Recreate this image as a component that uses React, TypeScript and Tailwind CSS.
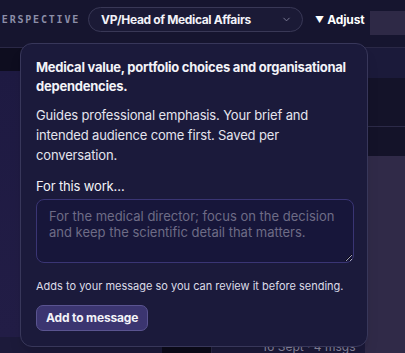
import { ChevronDown } from "lucide-react";

const font = { fontFamily: "Inter, 'Noto Sans', sans-serif" };

export default function App() {
  return (
    <div
      className="relative w-[405px] h-[353px] overflow-hidden bg-[#16152f] text-white"
      style={font}
    >
      {/* header */}
      <div className="flex items-start h-[47px] pt-[7px]">
        <span className="ml-[-6px] mt-[6px] text-[10px] leading-[13px] font-bold tracking-[1.8px] text-[#8c8ea8] font-['DejaVu_Sans_Mono',monospace]">
          PERSPECTIVE
        </span>
        <button className="ml-[8px] flex shrink-0 items-center justify-between w-[215px] h-[25px] pl-[12px] pr-[10px] rounded-full border border-[#393856] bg-[#1b1a36]">
          <span className="whitespace-nowrap text-[12px] font-bold tracking-[-0.35px] text-[#f2f2f8]">
            VP/Head of Medical Affairs
          </span>
          <ChevronDown size={11} strokeWidth={2} className="text-[#7f7f99]" />
        </button>
        <div className="ml-[12px] flex shrink-0 items-center gap-[3px] h-[25px]">
          <span className="text-[9px] leading-none">▼</span>
          <span className="text-[12px] font-bold tracking-[-0.1px]">Adjust</span>
        </div>
        <div className="ml-auto mt-[4px] w-[35px] h-[24px] shrink-0 bg-[#2e2946]" />
      </div>

      {/* body behind popover */}
      <div className="flex h-[306px] border-t border-[#2a2846]">
        <div className="flex flex-col flex-1">
          <div className="h-[23px] bg-[#0e0d1f]" />
          <div className="flex-1 bg-gradient-to-b from-[#1e1a42] to-[#221d46]" />
          <div className="flex h-[16px] bg-[#1c1a3a] text-[12px] text-[#8d8ba3]">
            <div className="ml-[162px] w-[50px] bg-[#0c0b1a] border-r border-[#2a2846]" />
            <span className="ml-[50px] leading-[16px] pt-[2px]">16 Sept · 4 msgs</span>
          </div>
        </div>
        <div className="flex flex-col w-[40px]">
          <div className="h-[30px] bg-[#1b1a3a]" />
          <div className="h-[49px] bg-[#141329] border-b border-[#2c2a48]" />
          <div className="h-[29px] bg-[#141329]" />
          <div className="flex-1 bg-[#302a48]" />
        </div>
      </div>

      {/* popover */}
      <div className="absolute left-[20px] top-[43px] w-[348px] h-[304px] rounded-[12px] border border-[#38375a] bg-[#1b1a3b] px-[15px] pt-[14px] shadow-lg tracking-[-0.15px]">
        <p className="text-[13px] leading-[19px] font-bold tracking-[-0.25px] text-[#f3f3f8]">
          Medical value, portfolio choices and organisational dependencies.
        </p>
        <p className="mt-[9px] text-[13px] leading-[20px] text-[#e4e4ee] pr-[40px]">
          Guides professional emphasis. Your brief and intended audience come first. Saved per
          conversation.
        </p>
        <p className="mt-[11px] text-[13px] leading-[20px] text-[#f3f3f8]">For this work…</p>
        <textarea
          className="mt-[3px] block w-[318px] h-[64px] rounded-[8px] border border-[#3a3574] bg-[#17163a] px-[12px] py-[8px] text-[13px] leading-[16px] tracking-normal text-white placeholder:text-[#6e6c86] outline-none"
          placeholder="For the medical director; focus on the decision and keep the scientific detail that matters."
        />
        <p className="mt-[15px] text-[11px] leading-[16px] tracking-normal text-[#dcdce8]">
          Adds to your message so you can review it before sending.
        </p>
        <button className="mt-[11px] h-[26px] px-[9px] rounded-[7px] border border-[#5a5490] bg-[#3b3570] text-[12px] font-bold tracking-[-0.15px] text-[#f3f3f8]">
          Add to message
        </button>
      </div>
    </div>
  );
}
